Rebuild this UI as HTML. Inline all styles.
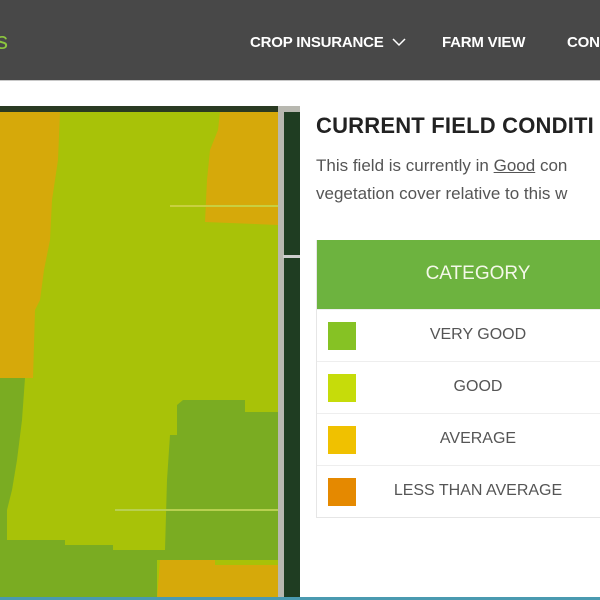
<!DOCTYPE html>
<html><head><style>
body{margin:0;width:600px;height:600px;overflow:hidden;background:#fff;font-family:"Liberation Sans",sans-serif;position:relative}
.hdr{position:absolute;left:0;top:0;width:600px;height:80px;background:#484848;border-bottom:1px solid #c8c8c8}
.hdr .l{position:absolute;top:44px;left:-2px;height:2px}
.nav{position:absolute;top:34px;color:#fff;font-size:15px;font-weight:bold;letter-spacing:-0.2px}
.logo{position:absolute;left:-4px;top:28px;color:#8cc63f;font-size:24px}
h1{position:absolute;left:316px;top:113px;margin:0;font-size:22px;font-weight:bold;color:#222;white-space:nowrap;letter-spacing:0.2px}
.p{position:absolute;left:316px;top:152px;font-size:17px;color:#555;line-height:28px;white-space:nowrap}
.tbl{position:absolute;left:316px;top:240px;width:300px;border-left:1px solid #e6e6e6;border-bottom:1px solid #e6e6e6}
.th{height:69px;background:#6db33f;color:#f4f8e8;font-size:19px;line-height:67px;text-align:center;width:322px;margin-left:0;padding-right:0}
.row{height:51px;border-top:1px solid #eee;position:relative}
.row .s{position:absolute;left:11px;top:12px;width:28px;height:28px}
.row .t{position:absolute;left:0;width:322px;text-align:center;top:16px;font-size:16px;color:#555}
</style></head><body>
<div class="hdr">
<div class="logo">s</div>
<div class="nav" style="left:250px">CROP INSURANCE <svg width="14" height="10" viewBox="0 0 14 10" style="margin-left:4px"><path d="M1 2 L7 8 L13 2" fill="none" stroke="#fff" stroke-width="1.5"/></svg></div>
<div class="nav" style="left:442px">FARM VIEW</div>
<div class="nav" style="left:567px">CON</div>
</div>
<svg style="position:absolute;left:0;top:106px" width="300" height="494" viewBox="0 106 300 494">
<rect x="0" y="106" width="300" height="494" fill="#a8c208"/>
<rect x="0" y="106" width="300" height="6" fill="#2a3a22"/>
<rect x="278" y="106" width="22" height="494" fill="#b8b8b0"/>
<rect x="284" y="112" width="16" height="488" fill="#1f3d22"/>
<rect x="283" y="255" width="17" height="3" fill="#ccc"/>
<polygon fill="#d6a90a" points="0,112 60,112 58,160 52,200 50,240 44,270 40,300 35,310 33,378 0,378"/>
<polygon fill="#d6a90a" points="220,112 278,112 278,225 205,222 207,180 210,150 218,130"/>
<polygon fill="#7aac22" points="0,378 25,378 22,420 17,460 12,490 7,510 7,540 65,540 65,545 113,545 113,550 165,550 165,560 157,560 157,600 0,600"/>
<polygon fill="#7aac22" points="183,400 245,400 245,412 278,412 278,560 157,560 165,550 167,480 170,435 177,435 177,405"/>
<polygon fill="#d6a90a" points="160,560 215,560 215,565 278,565 278,600 157,600"/>
<line x1="170" y1="206" x2="278" y2="206" stroke="#c8d040" stroke-width="2"/>
<line x1="115" y1="510" x2="278" y2="510" stroke="#b8d050" stroke-width="2"/>
<rect x="0" y="597" width="300" height="3" fill="#4a9ab0"/>
</svg>
<h1>CURRENT FIELD CONDITI</h1>
<div class="p">This field is currently in <span style="text-decoration:underline">Good</span> con<br>vegetation cover relative to this w</div>
<div class="tbl">
<div class="th">CATEGORY</div>
<div class="row"><div class="s" style="background:#86c224"></div><div class="t">VERY GOOD</div></div>
<div class="row"><div class="s" style="background:#c6dc0a"></div><div class="t">GOOD</div></div>
<div class="row"><div class="s" style="background:#f0c100"></div><div class="t">AVERAGE</div></div>
<div class="row"><div class="s" style="background:#e58900"></div><div class="t">LESS THAN AVERAGE</div></div>
</div>
<div style="position:absolute;left:300px;top:597px;width:300px;height:3px;background:#4a9ab0"></div>
</body></html>
